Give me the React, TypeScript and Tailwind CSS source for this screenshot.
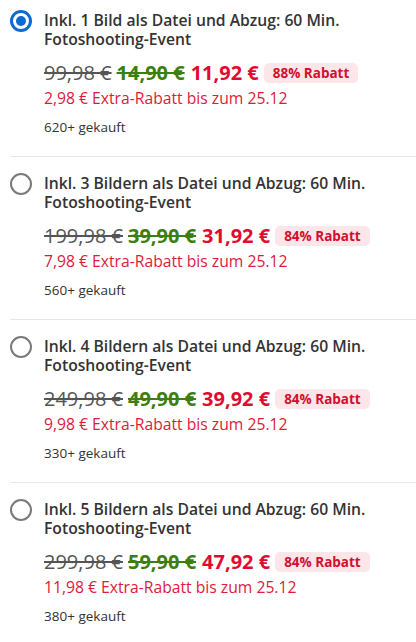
import React from "react";

type Item = {
  title: string;
  old: string;
  mid: string;
  price: string;
  pct: string;
  extra: string;
  sold: string;
  selected?: boolean;
};

const items: Item[] = [
  { title: "Inkl. 1 Bild als Datei und Abzug: 60 Min. Fotoshooting-Event", old: "99,98 €", mid: "14,90 €", price: "11,92 €", pct: "88% Rabatt", extra: "2,98 € Extra-Rabatt bis zum 25.12", sold: "620+ gekauft", selected: true },
  { title: "Inkl. 3 Bildern als Datei und Abzug: 60 Min. Fotoshooting-Event", old: "199,98 €", mid: "39,90 €", price: "31,92 €", pct: "84% Rabatt", extra: "7,98 € Extra-Rabatt bis zum 25.12", sold: "560+ gekauft" },
  { title: "Inkl. 4 Bildern als Datei und Abzug: 60 Min. Fotoshooting-Event", old: "249,98 €", mid: "49,90 €", price: "39,92 €", pct: "84% Rabatt", extra: "9,98 € Extra-Rabatt bis zum 25.12", sold: "330+ gekauft" },
  { title: "Inkl. 5 Bildern als Datei und Abzug: 60 Min. Fotoshooting-Event", old: "299,98 €", mid: "59,90 €", price: "47,92 €", pct: "84% Rabatt", extra: "11,98 € Extra-Rabatt bis zum 25.12", sold: "380+ gekauft" },
];

function Radio({ selected }: { selected?: boolean }) {
  if (selected) {
    return (
      <div className="w-[22px] h-[22px] rounded-full border-[3px] border-[#0c6bd0] flex items-center justify-center shrink-0">
        <div className="w-[10px] h-[10px] rounded-full bg-[#0c6bd0]" />
      </div>
    );
  }
  return <div className="w-[22px] h-[22px] rounded-full border-2 border-[#7a7a7a] shrink-0" />;
}

export default function App() {
  return (
    <div className="w-[416px] h-[642px] overflow-hidden bg-white" style={{ fontFamily: '"Open Sans", "Noto Sans", sans-serif' }}>
      <div className="-mt-[6px] pl-[10px]">
        {items.map((it, i) => (
          <div key={i} className="flex gap-[12px] pt-[17px] pb-[19px] border-b border-[#e6e6e6]">
            <div className="-mt-[1px]">
              <Radio selected={it.selected} />
            </div>
            <div className="flex flex-col">
              <div className="text-[15.7px] leading-[19px] font-semibold text-[#333]">{it.title}</div>
              <div className="flex items-center mt-[10px] h-[28px] whitespace-nowrap">
                <span className="text-[20px] text-[#555] line-through decoration-[1.5px]">{it.old}</span>
                <span className="text-[20px] font-bold text-[#3d7e11] line-through ml-[5px]">{it.mid}</span>
                <span className="text-[20px] font-bold text-[#e00b2e] ml-[6px]">{it.price}</span>
                <span className="ml-[5px] bg-[#fde6ea] text-[#d20f31] text-[13.5px] font-bold rounded-[5px] px-[9px] h-[20px] flex items-center">{it.pct}</span>
              </div>
              <div className="text-[15.7px] leading-[22px] text-[#dc1a3a]">{it.extra}</div>
              <div className="text-[13.5px] leading-[20px] text-[#333] mt-[8px]">{it.sold}</div>
            </div>
          </div>
        ))}
      </div>
    </div>
  );
}
